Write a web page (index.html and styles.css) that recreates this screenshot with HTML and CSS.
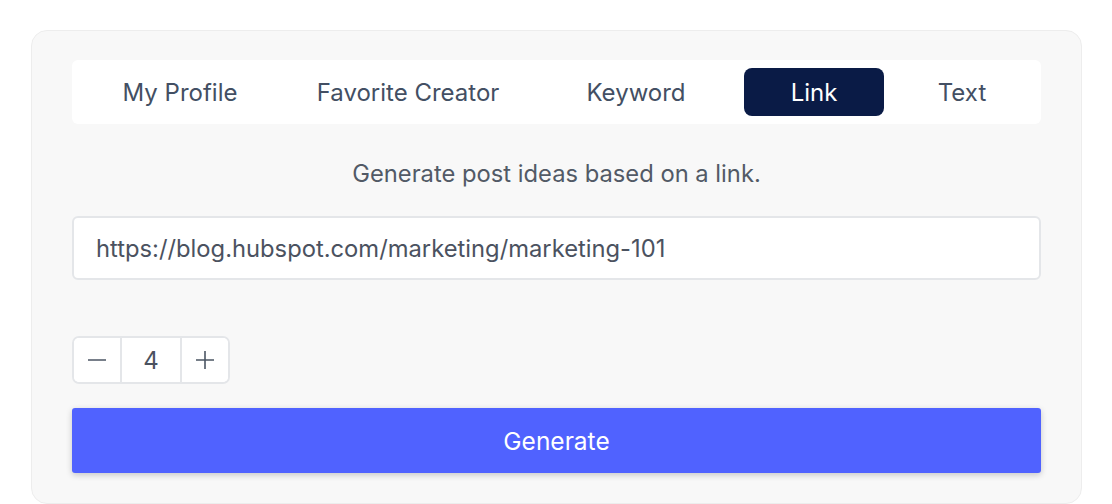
FILE: index.html
```html
<!DOCTYPE html>
<html lang="en">
<head>
    <meta charset="UTF-8">
    <meta name="viewport" content="width=device-width, initial-scale=1.0">
    <title>Post Ideas</title>
    <link rel="stylesheet" href="styles.css">
</head>
<body>
    <div class="generator">
        <div class="tabs">
            <button class="tab">My Profile</button>
            <button class="tab">Favorite Creator</button>
            <button class="tab">Keyword</button>
            <button class="tab active">Link</button>
            <button class="tab">Text</button>
        </div>

        <p class="description">Generate post ideas based on a link.</p>

        <input type="text" class="link-input" value="https://blog.hubspot.com/marketing/marketing-101">

        <div class="stepper">
            <button class="step">
                <svg width="20" height="20" viewBox="0 0 20 20"><path d="M1 10h18" stroke="#4b5563" stroke-width="1.6"/></svg>
            </button>
            <span class="count">4</span>
            <button class="step">
                <svg width="20" height="20" viewBox="0 0 20 20"><path d="M1 10h18M10 1v18" stroke="#4b5563" stroke-width="1.6"/></svg>
            </button>
        </div>

        <button class="generate">Generate</button>
    </div>
</body>
</html>
```

FILE: styles.css
```css
body {
    margin: 0;
    font-family: Inter, "Noto Sans", sans-serif;
    background-color: white;
}

.generator {
    box-sizing: border-box;
    width: 1051px;
    margin: 30px 0 0 31px;
    padding: 29px 40px 30px 40px;
    background-color: #f8f8f8;
    border: 1px solid #ededed;
    border-radius: 16px;
    display: flex;
    flex-direction: column;
}

.tabs {
    display: grid;
    grid-template-columns: 200fr 240fr 200fr 140fr 140fr;
    gap: 8px;
    padding: 8px 9px 8px 8px;
    background-color: white;
    border-radius: 6px;
}

.tab {
    height: 48px;
    border: none;
    background: none;
    border-radius: 8px;
    font-family: inherit;
    font-size: 24px;
    color: #434f63;
    cursor: pointer;
}

    .tab.active {
        background-color: #0a1b46;
        color: white;
    }

.description {
    margin: 36px 0 0 0;
    line-height: 28px;
    text-align: center;
    font-size: 23.75px;
    color: #525a66;
}

.link-input {
    box-sizing: border-box;
    margin-top: 28px;
    height: 64px;
    padding: 0 22px;
    border: 2px solid #e4e6e9;
    border-radius: 6px;
    background-color: white;
    font-family: inherit;
    font-size: 23.75px;
    color: #4b5260;
}

.stepper {
    display: flex;
    align-self: flex-start;
    margin-top: 56px;
    height: 48px;
    box-sizing: border-box;
    border: 2px solid #e4e6e9;
    border-radius: 7px;
    background-color: white;
    overflow: hidden;
}

.step {
    width: 46px;
    border: none;
    background: white;
    display: flex;
    align-items: center;
    justify-content: center;
    padding: 0;
    cursor: pointer;
}

.count {
    width: 58px;
    display: flex;
    align-items: center;
    justify-content: center;
    border-left: 2px solid #e4e6e9;
    border-right: 2px solid #e4e6e9;
    font-size: 24px;
    color: #4b5260;
}

.generate {
    margin-top: 24px;
    height: 65px;
    border: none;
    border-radius: 3px;
    background-color: #5062ff;
    color: white;
    font-family: inherit;
    font-size: 24.5px;
    box-shadow: 0 2px 6px rgba(0, 0, 0, 0.2);
    cursor: pointer;
}
```
